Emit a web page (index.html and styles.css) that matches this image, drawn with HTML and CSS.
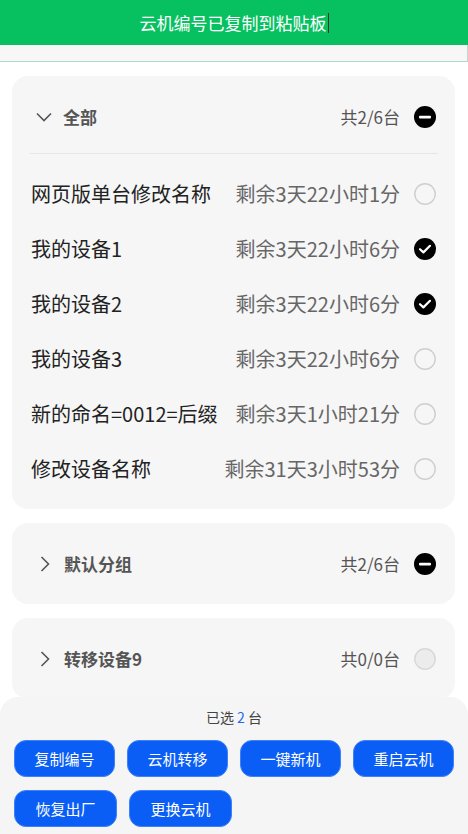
FILE: index.html
```html
<!DOCTYPE html>
<html lang="zh">
<head>
<meta charset="utf-8">
<title>云机列表</title>
<link rel="stylesheet" href="styles.css">
</head>
<body>
<div class="toast">云机编号已复制到粘贴板<span class="caret"></span></div>
<div class="strip"></div>
<main class="groups">
  <section class="card">
    <div class="head open">
      <svg class="chev" width="16" height="10" viewBox="0 0 16 10"><path d="M1 1.5 L8 8.5 L15 1.5" fill="none" stroke="#555" stroke-width="1.6"/></svg>
      <span class="title">全部</span>
      <span class="count">共2/6台</span>
      <svg class="box" viewBox="0 0 22 22"><circle cx="11" cy="11" r="11" fill="#000"/><rect x="5" y="9.8" width="12" height="2.6" rx="1" fill="#fff"/></svg>
    </div>
    <div class="divider"></div>
    <ul class="list">
      <li class="row"><span class="name">网页版单台修改名称</span><span class="time">剩余3天22小时1分</span><svg class="box" viewBox="0 0 22 22"><circle cx="11" cy="11" r="10.2" fill="none" stroke="#cfcfcf" stroke-width="1.4"/></svg></li>
      <li class="row"><span class="name">我的设备1</span><span class="time">剩余3天22小时6分</span><svg class="box" viewBox="0 0 22 22"><circle cx="11" cy="11" r="11" fill="#000"/><path d="M6 11.2 L9.4 14.4 L16 7.8" fill="none" stroke="#fff" stroke-width="2.2" stroke-linecap="round" stroke-linejoin="round"/></svg></li>
      <li class="row"><span class="name">我的设备2</span><span class="time">剩余3天22小时6分</span><svg class="box" viewBox="0 0 22 22"><circle cx="11" cy="11" r="11" fill="#000"/><path d="M6 11.2 L9.4 14.4 L16 7.8" fill="none" stroke="#fff" stroke-width="2.2" stroke-linecap="round" stroke-linejoin="round"/></svg></li>
      <li class="row"><span class="name">我的设备3</span><span class="time">剩余3天22小时6分</span><svg class="box" viewBox="0 0 22 22"><circle cx="11" cy="11" r="10.2" fill="none" stroke="#cfcfcf" stroke-width="1.4"/></svg></li>
      <li class="row"><span class="name">新的命名=0012=后缀</span><span class="time">剩余3天1小时21分</span><svg class="box" viewBox="0 0 22 22"><circle cx="11" cy="11" r="10.2" fill="none" stroke="#cfcfcf" stroke-width="1.4"/></svg></li>
      <li class="row"><span class="name">修改设备名称</span><span class="time">剩余31天3小时53分</span><svg class="box" viewBox="0 0 22 22"><circle cx="11" cy="11" r="10.2" fill="none" stroke="#cfcfcf" stroke-width="1.4"/></svg></li>
    </ul>
  </section>
  <section class="card">
    <div class="head closed">
      <svg class="chev right" width="10" height="16" viewBox="0 0 10 16"><path d="M1.5 1 L8.5 8 L1.5 15" fill="none" stroke="#555" stroke-width="1.6"/></svg>
      <span class="title">默认分组</span>
      <span class="count">共2/6台</span>
      <svg class="box" viewBox="0 0 22 22"><circle cx="11" cy="11" r="11" fill="#000"/><rect x="5" y="9.8" width="12" height="2.6" rx="1" fill="#fff"/></svg>
    </div>
  </section>
  <section class="card">
    <div class="head closed">
      <svg class="chev right" width="10" height="16" viewBox="0 0 10 16"><path d="M1.5 1 L8.5 8 L1.5 15" fill="none" stroke="#555" stroke-width="1.6"/></svg>
      <span class="title">转移设备9</span>
      <span class="count">共0/0台</span>
      <svg class="box" viewBox="0 0 22 22"><circle cx="11" cy="11" r="10.2" fill="#ececec" stroke="#d8d8d8" stroke-width="1.4"/></svg>
    </div>
  </section>
</main>
<footer class="panel">
  <div class="selected">已选 <em>2</em> 台</div>
  <div class="actions">
    <button class="btn">复制编号</button>
    <button class="btn">云机转移</button>
    <button class="btn">一键新机</button>
    <button class="btn">重启云机</button>
    <button class="btn">恢复出厂</button>
    <button class="btn">更换云机</button>
  </div>
</footer>
</body>
</html>
```
FILE: styles.css
```css
* { box-sizing: border-box; }
html, body { margin: 0; padding: 0; }
body {
  background: #fff;
  font-family: "Noto Sans CJK SC", "Noto Sans", sans-serif;
  color: #222;
  width: 468px;
  height: 834px;
  overflow: hidden;
}
.toast {
  height: 45px;
  background: #07c160;
  color: #fff;
  font-size: 17px;
  display: flex;
  align-items: center;
  justify-content: center;
}
.caret {
  display: inline-block;
  width: 1px;
  height: 20px;
  background: #333;
  margin-left: 1px;
}
.strip {
  height: 17px;
  background: #f7f7f7;
  border-bottom: 1px solid #a9dcc2;
  border-right: 1px solid #c8d6cf;
}
.groups {
  padding: 14px 13px 0 12px;
  display: flex;
  flex-direction: column;
  gap: 14px;
}
.card {
  background: #f6f6f6;
  border-radius: 16px;
}
.head {
  display: flex;
  align-items: center;
  padding: 0 19px 0 24px;
}
.head.open {
  height: 77px;
  padding-top: 4px;
}
.head.closed {
  height: 81px;
  padding-left: 28px;
}
.divider {
  height: 1px;
  background: #e6e6e6;
  margin: 0 17px 0 18px;
}
.chev { flex: none; }
.chev.right { margin-right: 3px; }
.title {
  font-size: 17px;
  font-weight: 700;
  color: #555;
  margin-left: 11px;
  flex: 1;
}
.count {
  font-size: 17px;
  color: #555;
  margin-right: 14px;
}
.box {
  width: 22px;
  height: 22px;
  flex: none;
  display: block;
}
.list {
  list-style: none;
  margin: 0;
  padding: 12px 19px 13px 19px;
}
.row {
  height: 55px;
  display: flex;
  align-items: center;
  font-size: 20px;
}
.name {
  flex: 1;
  color: #222;
  white-space: nowrap;
}
.time {
  color: #666;
  margin-right: 14px;
  white-space: nowrap;
}
.panel {
  position: fixed;
  left: 0;
  right: 0;
  bottom: 0;
  height: 137px;
  background: #f5f5f5;
  border-radius: 18px 18px 0 0;
  padding: 10px 14px 0 14px;
}
.selected {
  text-align: center;
  font-size: 14px;
  line-height: 20px;
  color: #444;
}
.selected em {
  font-style: normal;
  color: #1d6cf0;
}
.actions {
  margin-top: 13px;
  display: flex;
  flex-wrap: wrap;
  column-gap: 12px;
  row-gap: 13px;
}
.btn {
  height: 37px;
  width: 101px;
  border: 1px solid #3f82f7;
  border-radius: 12px;
  background: #0a5ef5;
  color: #fff;
  font-family: inherit;
  font-size: 15px;
  padding: 0;
}
.btn:nth-child(n+5) { width: 103px; }
```
